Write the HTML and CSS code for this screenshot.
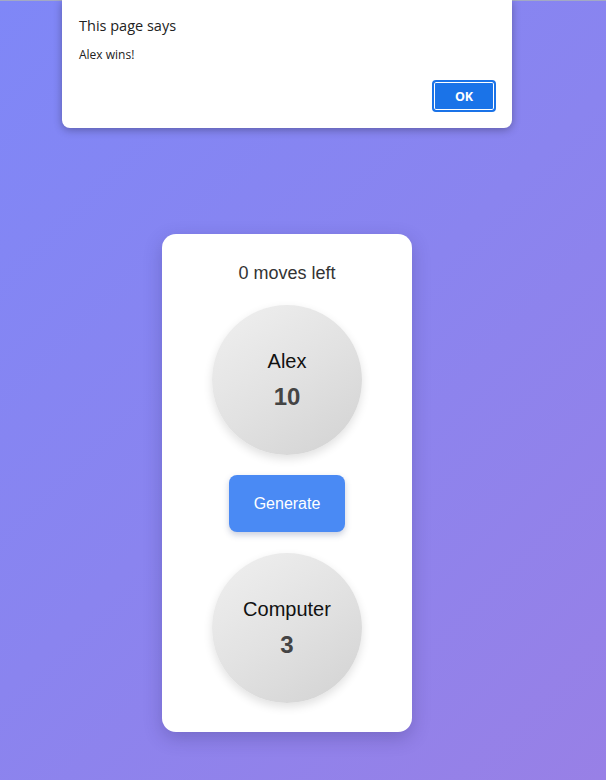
FILE: index.html
```html
<!DOCTYPE html>
<html>
<head>
<meta charset="utf-8">
<link rel="stylesheet" href="styles.css">
</head>
<body>
<div class="topline"></div>
<main class="page">
  <section class="card">
    <div class="moves">0 moves left</div>
    <div class="player">
      <div class="name">Alex</div>
      <div class="score">10</div>
    </div>
    <button class="generate">Generate</button>
    <div class="player">
      <div class="name">Computer</div>
      <div class="score">3</div>
    </div>
  </section>
</main>
<div class="dialog">
  <div class="dialog-title">This page says</div>
  <div class="dialog-msg">Alex wins!</div>
  <div class="dialog-actions"><button class="ok">OK</button></div>
</div>
</body>
</html>
```
FILE: styles.css
```css
html, body {
  margin: 0;
  padding: 0;
  height: 100%;
}
body {
  background: linear-gradient(135deg, #7f87f7 0%, #8a84ef 50%, #9880e6 100%);
  font-family: "Liberation Sans", Arial, sans-serif;
  position: relative;
  overflow: hidden;
}
.topline {
  position: absolute;
  top: 0;
  left: 0;
  right: 0;
  height: 1px;
  background: #a3a9c4;
}
.page {
  display: flex;
  justify-content: center;
  align-items: flex-start;
  padding-top: 234px;
  padding-right: 32px;
}
.card {
  width: 250px;
  box-sizing: border-box;
  background: #fff;
  border-radius: 14px;
  box-shadow: 0 6px 18px rgba(40, 30, 90, 0.25);
  padding: 29px 0 29px;
  display: flex;
  flex-direction: column;
  align-items: center;
  gap: 20px;
}
.moves {
  font-size: 18px;
  line-height: 21px;
  color: #333;
  margin-bottom: 1px;
}
.player {
  width: 150px;
  height: 150px;
  border-radius: 50%;
  background: linear-gradient(145deg, #f0f0f0 0%, #e2e2e2 50%, #d2d2d2 100%);
  box-shadow: 0 4px 10px rgba(0, 0, 0, 0.12);
  display: flex;
  flex-direction: column;
  align-items: center;
  justify-content: center;
}
.name {
  font-size: 20px;
  line-height: 23px;
  color: #111;
  margin-top: 0;
}
.score {
  font-size: 24px;
  font-weight: bold;
  line-height: 28px;
  color: #444;
  margin-top: 10px;
}
.generate {
  width: 116px;
  height: 57px;
  border: none;
  border-radius: 8px;
  background: #4a8af4;
  color: #fff;
  font-family: "Liberation Sans", Arial, sans-serif;
  font-size: 16px;
  box-shadow: 0 3px 6px rgba(40, 60, 120, 0.25);
  margin-top: 0;
  margin-bottom: 1px;
}
.dialog {
  position: absolute;
  top: 0;
  left: 62px;
  width: 450px;
  height: 128px;
  box-sizing: border-box;
  background: #fff;
  border-radius: 0 0 8px 8px;
  box-shadow: 0 2px 8px rgba(0, 0, 0, 0.3);
  padding: 16px 16px 0 17px;
  font-family: "Open Sans", "Noto Sans", sans-serif;
  color: #222;
}
.dialog-title {
  font-size: 14.5px;
  line-height: 20px;
}
.dialog-msg {
  font-size: 12px;
  line-height: 16px;
  margin-top: 11px;
}
.dialog-actions {
  display: flex;
  justify-content: flex-end;
  margin-top: 17px;
}
.ok {
  width: 64px;
  height: 32px;
  box-sizing: border-box;
  background: #1a73e8;
  color: #fff;
  border: 2px solid #1a73e8;
  box-shadow: inset 0 0 0 1px #fff;
  border-radius: 4px;
  font-family: "Open Sans", "Noto Sans", sans-serif;
  font-weight: bold;
  font-size: 12.5px;
  margin-right: 0;
}
```
